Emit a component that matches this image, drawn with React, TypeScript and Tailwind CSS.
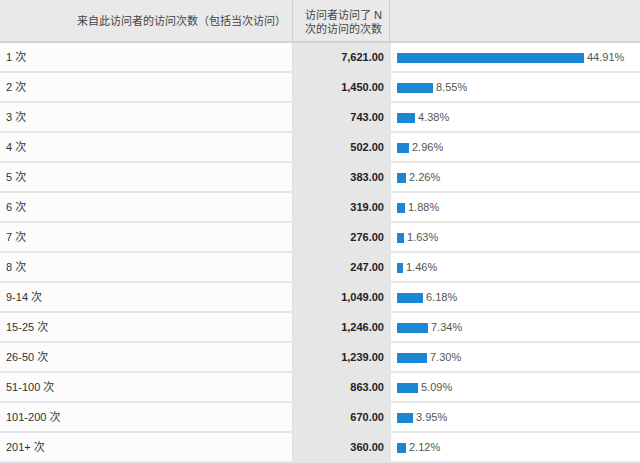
const rows: [string, string, number][] = [
  ["1 次", "7,621.00", 44.91],
  ["2 次", "1,450.00", 8.55],
  ["3 次", "743.00", 4.38],
  ["4 次", "502.00", 2.96],
  ["5 次", "383.00", 2.26],
  ["6 次", "319.00", 1.88],
  ["7 次", "276.00", 1.63],
  ["8 次", "247.00", 1.46],
  ["9-14 次", "1,049.00", 6.18],
  ["15-25 次", "1,246.00", 7.34],
  ["26-50 次", "1,239.00", 7.3],
  ["51-100 次", "863.00", 5.09],
  ["101-200 次", "670.00", 3.95],
  ["201+ 次", "360.00", 2.12],
];

export default function App() {
  return (
    <div
      className="w-[640px] h-[463px] overflow-hidden bg-white text-[11px] text-[#333]"
      style={{ fontFamily: '"Liberation Sans", "Noto Sans CJK SC", sans-serif' }}
    >
      {/* header */}
      <div className="flex h-[43px] bg-[#e9e9e9] border-b-2 border-[#d2d2d2]">
        <div className="w-[292px] flex items-center justify-end pr-[6px] pt-[1px] text-[#444]">
          来自此访问者的访问次数（包括当次访问）
        </div>
        <div className="w-[98px] flex flex-col justify-center items-end pr-[7px] pt-[3px] border-l border-r border-[#cfcfcf] leading-[14px] text-[#444]">
          <span>访问者访问了 N</span>
          <span>次的访问的次数</span>
        </div>
        <div className="flex-1" />
      </div>

      {rows.map(([label, count, pct]) => (
        <div key={label} className="flex h-[30px] border-b-2 border-[#e6e6e6]">
          <div className="w-[292px] flex items-center pl-[6px] pt-[1px] bg-[#fcfcfc]">{label}</div>
          <div className="w-[99px] flex items-center justify-end pr-[7px] pt-[1px] bg-[#e6e6e6] border-l border-[#e0e0e0] font-bold text-[#222]">
            {count}
          </div>
          <div className="flex-1 flex items-center pl-[6px] pt-[1px] bg-white">
            <div className="h-[10px] bg-[#1a86d4]" style={{ width: Math.round(pct * 4.16) }} />
            <span className="ml-[3px] text-[#555]">{pct.toFixed(2)}%</span>
          </div>
        </div>
      ))}
    </div>
  );
}
